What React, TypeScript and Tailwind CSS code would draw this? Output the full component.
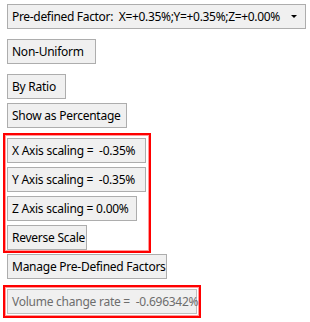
import React from "react";

const btn =
  "h-[25px] flex items-center pl-[4px] border border-[#adadad] bg-[#f0f0f0] text-[12px] tracking-[-0.25px] text-black whitespace-pre leading-none";

export default function App() {
  return (
    <div
      className="w-[310px] h-[322px] bg-white flex flex-col items-start pl-[3px] pt-[4px]"
      style={{ fontFamily: '"Noto Sans", "Open Sans", sans-serif' }}
    >
      <div className={`${btn} ml-[4px] w-[299px] pr-[8px] justify-between`}>
        <span className="tracking-[-0.32px]">Pre-defined Factor:  X=+0.35%;Y=+0.35%;Z=+0.00%</span>
        <svg className="shrink-0" width="6" height="3" viewBox="0 0 6 3">
          <polygon points="0,0 6,0 3,3" fill="#000" />
        </svg>
      </div>
      <div className={`${btn} ml-[4px] mt-[10px] w-[89px]`}>Non-Uniform</div>
      <div className={`${btn} ml-[4px] mt-[10px] w-[59px]`}>By Ratio</div>
      <div className={`${btn} ml-[4px] mt-[4px] w-[120px]`}>Show as Percentage</div>
      <div className="mt-[5px] w-[148px] border-2 border-[#ff0000] shadow-[inset_0_0_0_1px_#ff9a9a] pl-[2px] pt-[3px] pb-[1px] flex flex-col items-start gap-[4px]">
        <div className={`${btn} w-[139px]`}>X Axis scaling =  -0.35%</div>
        <div className={`${btn} w-[139px]`}>Y Axis scaling =  -0.35%</div>
        <div className={`${btn} w-[130px]`}>Z Axis scaling = 0.00%</div>
        <div className={`${btn} w-[80px]`}>Reverse Scale</div>
      </div>
      <div className={`${btn} ml-[4px] mt-[1px] w-[160px]`}>Manage Pre-Defined Factors</div>
      <div className="mt-[6px] w-[198px] border-2 border-[#ff0000] shadow-[inset_0_0_0_1px_#ff9a9a] p-[2px]">
        <div className={`${btn} w-[190px] !text-[#6d6d6d] border-[#bfbfbf]`}>
          Volume change rate =  -0.696342%
        </div>
      </div>
    </div>
  );
}
